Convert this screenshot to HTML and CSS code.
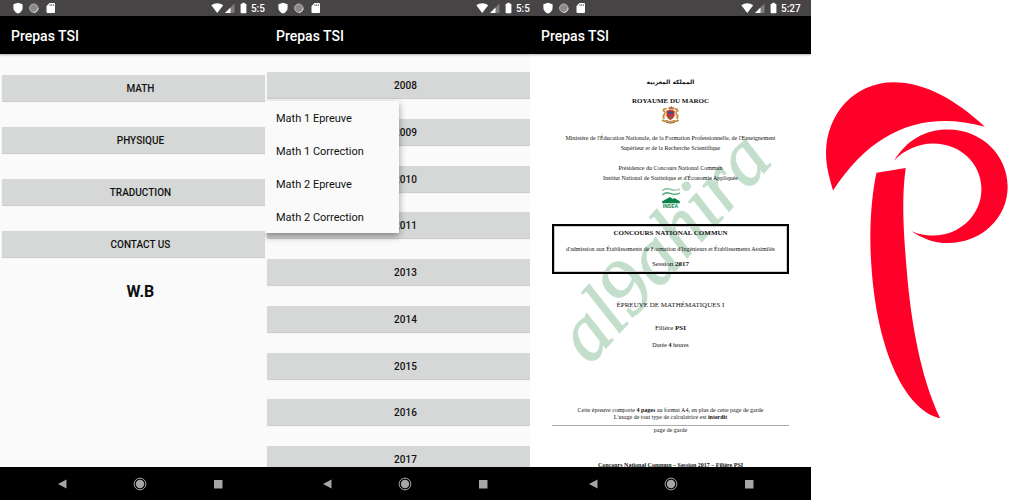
FILE: index.html
```html
<!DOCTYPE html>
<html lang="fr">
<head>
<meta charset="utf-8">
<title>Prepas TSI</title>
<link rel="stylesheet" href="styles.css">
</head>
<body>
<svg class="defs" width="0" height="0" aria-hidden="true">
  <symbol id="notices" viewBox="0 0 44 12">
    <path fill="#fff" d="M5 .8 9.600 2.300V6c0 2.600-1.900 4.500-4.600 5.600C2.300 10.500.4 8.600.4 6V2.300z"/>
    <circle cx="20.800" cy="6.200" r="4.200" fill="#8b898a" stroke="#b9b8b8" stroke-width="1"/>
    <path d="M25 6.200a4.200 4.200 0 0 1-4.200 4.200" fill="none" stroke="#ddd" stroke-width="1"/>
    <path fill="#fff" d="M36.500 1H41a1 1 0 0 1 1 1v8a1 1 0 0 1-1 1h-6.500a1 1 0 0 1-1-1V4z"/>
    <path d="M37 2.200v1.800M38.700 2.200v1.800M40.400 2.200v1.800" stroke="#474445" stroke-width=".7"/>
  </symbol>
  <symbol id="signals" viewBox="0 0 36 12">
    <path fill="#fff" d="M.3 3.300C3.800.6 8.700.6 12.200 3.300L6.250 11z"/>
    <path fill="#7d7b7c" d="M23.500 1.500V11H14z"/>
    <path fill="#fff" d="M19.500 5.500V11H14z"/>
    <path fill="#fff" d="M31.300.8h2.400v1h1.100q.6 0 .6.600v8.200q0 .6-.6.600h-4.600q-.6 0-.6-.6V2.400q0-.6.6-.6h1.100z"/>
  </symbol>
  <symbol id="back" viewBox="0 0 14 14"><path fill="#a6a6a6" d="M11.500 2.600v9L3 7.100z"/></symbol>
  <symbol id="home" viewBox="0 0 14 14"><circle cx="7" cy="7" r="5.900" fill="none" stroke="#b5b5b5" stroke-width=".9"/><circle cx="7" cy="7" r="4.200" fill="#a6a6a6"/></symbol>
  <symbol id="recent" viewBox="0 0 14 14"><path fill="#a6a6a6" d="M3 3h8.500v8.500H3z"/></symbol>
</svg>

<main class="gallery">
  <section class="shot">
    <div class="screen screen-cut">
      <div class="status">
        <svg class="notices"><use href="#notices"/></svg>
        <svg class="signals"><use href="#signals"/></svg>
        <span class="time">5:5</span>
      </div>
      <header class="appbar"><h1>Prepas TSI</h1></header>
      <div class="content menu">
        <button class="tile">MATH</button>
        <button class="tile">PHYSIQUE</button>
        <button class="tile">TRADUCTION</button>
        <button class="tile">CONTACT US</button>
        <p class="signature">W.B</p>
      </div>
      <nav class="navbar">
        <button aria-label="Back"><svg><use href="#back"/></svg></button>
        <button aria-label="Home"><svg><use href="#home"/></svg></button>
        <button aria-label="Recent"><svg><use href="#recent"/></svg></button>
      </nav>
    </div>
  </section>

  <section class="shot">
    <div class="screen screen-cut">
      <div class="status">
        <svg class="notices"><use href="#notices"/></svg>
        <svg class="signals"><use href="#signals"/></svg>
        <span class="time">5:5</span>
      </div>
      <header class="appbar"><h1>Prepas TSI</h1></header>
      <div class="content">
        <div class="years">
          <button class="tile">2008</button>
          <button class="tile">2009</button>
          <button class="tile">2010</button>
          <button class="tile">2011</button>
          <button class="tile">2013</button>
          <button class="tile">2014</button>
          <button class="tile">2015</button>
          <button class="tile">2016</button>
          <button class="tile">2017</button>
        </div>
        <div class="popup">
          <button>Math 1 Epreuve</button>
          <button>Math 1 Correction</button>
          <button>Math 2 Epreuve</button>
          <button>Math 2 Correction</button>
        </div>
      </div>
      <nav class="navbar">
        <button aria-label="Back"><svg><use href="#back"/></svg></button>
        <button aria-label="Home"><svg><use href="#home"/></svg></button>
        <button aria-label="Recent"><svg><use href="#recent"/></svg></button>
      </nav>
    </div>
  </section>

  <section class="shot">
    <div class="screen">
      <div class="status">
        <svg class="notices"><use href="#notices"/></svg>
        <svg class="signals"><use href="#signals"/></svg>
        <span class="time">5:27</span>
      </div>
      <header class="appbar"><h1>Prepas TSI</h1></header>
      <div class="content">
        <svg class="watermark" viewBox="0 0 281 413"><text transform="translate(60 312) rotate(-48)">al9ahira</text></svg>
        <article class="paper">
          <p class="arabic" lang="ar" dir="rtl">المملكة المغربية</p>
          <h2 class="kingdom">ROYAUME DU MAROC</h2>
          <svg class="emblem" viewBox="0 0 57 54">
            <path fill="#b5392c" d="M22 8 24 2l4 3 3-5 3 5 4-3 1 6z"/>
            <path fill="#d8a13c" d="M28 7l2 6h-5zM36 7l2 5h-6z"/>
            <path fill="none" stroke="#c98f35" stroke-width="5" d="M17 9q-9-2-10 5 8 3 3 11-6 6 0 14M40 9q9-2 10 5-8 3-3 11 6 6 0 14"/>
            <path fill="none" stroke="#e3bc68" stroke-width="2" d="M16 14l-5 6 6 5-6 8M41 14l5 6-6 5 6 8"/>
            <path fill="#dc2334" stroke="#b07535" stroke-width="2" d="M17 15q11-7 23 0v14q-2 8-12 13-9-5-11-13z"/>
            <path fill="#29528e" d="M21 19q7-6 15 0v7H21z"/>
            <path fill="#d33140" d="M23 23h11v4H23z"/>
            <path fill="#3c884c" d="m28 28 2 4h4l-3 2 1 4-4-2-4 2 1-4-3-2h4z"/>
            <path fill="none" stroke="#c28d42" stroke-width="5" d="M3 42q7 6 14 2 11 7 22 0 7 4 14-2"/>
            <path fill="none" stroke="#9d5431" stroke-width="3" d="M15 49q13 5 27 0"/>
          </svg>
          <p class="ministry">Ministère de l'Éducation Nationale, de la Formation Professionnelle, de l'Enseignement</p>
          <p>Supérieur et de la Recherche Scientifique</p>
          <p class="presidency">Présidence du Concours National Commun</p>
          <p>Institut National de Statistique et d'Économie Appliquée</p>
          <div class="insea">
            <svg viewBox="0 0 58 54">
              <path fill="#8fc7a5" d="M1 9Q12-1 28 5t29-1v5Q42 15 28 10T1 14z"/>
              <path fill="#5bae7f" d="M1 22Q12 12 28 18t29-1v5Q42 28 28 23T1 27z"/>
              <path fill="#08834b" d="M1 45 26 32l9 6 5-3 17 10v7H1z"/>
            </svg>
            <span>INSEA</span>
          </div>
          <div class="exam">
            <h3>CONCOURS NATIONAL COMMUN</h3>
            <p class="admission">d'admission aux Établissements de Formation d'Ingénieurs et Établissements Assimilés</p>
            <p class="session">Session <b>2017</b></p>
          </div>
          <p class="subject">ÉPREUVE DE MATHÉMATIQUES I</p>
          <p class="stream">Filière <b>PSI</b></p>
          <p class="duration">Durée <b>4</b> heures</p>
          <div class="note">
            <p>Cette épreuve comporte <b>4 pages</b> au format A4, en plus de cette page de garde</p>
            <p>L'usage de tout type de calculatrice est <b>interdit</b></p>
          </div>
          <p class="footer">page de garde</p>
          <p class="next"><b>Concours National Commun – Session 2017 – Filière PSI</b></p>
        </article>
      </div>
      <nav class="navbar">
        <button aria-label="Back"><svg><use href="#back"/></svg></button>
        <button aria-label="Home"><svg><use href="#home"/></svg></button>
        <button aria-label="Recent"><svg><use href="#recent"/></svg></button>
      </nav>
    </div>
  </section>

  <section class="brand">
    <svg viewBox="32 35 548 1014" role="img" aria-label="Logo">
      <g fill="#ff0029">
        <path d="M53 362C43 325 32 290 32 250 32 130 120 36 235 36c95 0 190 54 275 134C330 120 175 175 53 362z"/>
        <path d="M237 272C275 210 330 178 400 178c100 0 179 77 179 172S500 520 400 520c-45 0-80-15-114-38 19 11 44 15 69 15 80 0 145-62 145-140S435 220 355 220c-45 0-90 20-118 52z"/>
        <path d="M184 308 272 294C260 380 264 470 275 600 287 750 315 920 376 1048 270 1025 180 840 167 560 162 470 170 370 184 308z"/>
      </g>
    </svg>
  </section>
</main>
</body>
</html>
```
FILE: styles.css
```css
* { box-sizing: border-box; }
body { margin: 0; background: #fff; font-family: Roboto, sans-serif; color: #111; }
h1, h2, h3, p { margin: 0; }
button { border: 0; padding: 0; font: inherit; color: inherit; background: none; }
svg { display: block; }
.defs { position: absolute; }

.gallery { display: grid; grid-template-columns: 265fr 265fr 281fr 213fr; height: 100vh; min-height: 500px; }
.shot { min-width: 0; overflow: hidden; }
.screen { display: flex; flex-direction: column; height: 100%; }
.screen-cut { width: 106%; background: #fafafa; }

.status { display: flex; align-items: center; height: 16px; padding: 0 10px 0 13px; background: #474445; color: #fff; }
.notices { width: 44px; height: 12px; }
.signals { width: 36px; height: 12px; margin-left: auto; }
.time { width: 20px; margin-left: 4px; font-size: 10px; font-weight: 500; line-height: 16px; padding-top: 1px; }

.appbar { display: flex; align-items: center; height: 38px; padding: 2px 11px 0; background: #000; color: #fff; box-shadow: 0 1px 2px rgba(0, 0, 0, .3); z-index: 1; }
.appbar h1 { font-size: 14px; font-weight: 500; line-height: 20px; }

.content { position: relative; flex: 1; min-height: 0; overflow: hidden; }
.tile { height: 26px; flex: none; padding-top: 1px; border-radius: 1px; background: #d6d8d7; box-shadow: 0 1px 1px rgba(0, 0, 0, .2); font-size: 10px; font-weight: 500; text-align: center; }
.menu { display: flex; flex-direction: column; gap: 26px; padding: 21px 2px 0; }
.signature { padding-top: 1px; font-size: 16px; font-weight: 700; line-height: 16px; text-align: center; }
.years { display: flex; flex-direction: column; justify-content: space-between; height: calc(100% + 5px); padding: 18px 2px 0; }
.popup { position: absolute; top: 47px; left: 0; display: flex; flex-direction: column; width: 134px; background: #fafafa; box-shadow: 0 3px 7px rgba(0, 0, 0, .4); }
.popup button { height: 33px; padding: 2px 0 0 11px; font-size: 11px; text-align: left; }

.navbar { display: flex; justify-content: center; align-items: center; gap: 64px; height: 33px; background: #000; }
.navbar svg { width: 14px; height: 14px; }

.watermark { position: absolute; inset: 0; width: 100%; height: 100%; }
.watermark text { font: italic 80px "Liberation Serif", serif; fill: #c3dfcc; stroke: #c3dfcc; stroke-width: 1px; }
.paper { position: relative; padding: 23px 22px 0; font: 6px/10px "Liberation Serif", serif; text-align: center; white-space: nowrap; }
.paper h2, .paper h3 { font-size: 7px; line-height: 10px; }
.paper .arabic { font-family: "DejaVu Sans", sans-serif; font-weight: 700; }
.paper .kingdom { margin-top: 9px; }
.emblem { width: 19px; height: 18px; margin: 0 auto; }
.ministry { margin-top: 9px; }
.presidency { margin-top: 10px; }
.insea { width: 20px; margin: 4px auto 0; color: #08834b; font: 700 5px/5px "Liberation Sans", sans-serif; }
.insea svg { width: 20px; height: 17px; }
.insea span { display: block; }
.exam { margin-top: 15px; padding: 2px 0 3px; border: 2px solid #000; box-shadow: inset 0 0 0 1px #ccc; }
.admission { margin-top: 6px; }
.session { margin-top: 5px; font-size: 7px; }
.subject { margin-top: 26px; font-size: 7px; }
.stream { margin-top: 13px; font-size: 7px; }
.duration { margin-top: 7px; }
.note { margin-top: 57px; padding-bottom: 4px; border-bottom: 1px solid #aaa; line-height: 7px; }
.footer { margin-top: 1px; line-height: 7px; }
.next { margin-top: 28px; line-height: 7px; }

.brand { display: flex; align-items: center; padding: 0 16px 0 15px; }
.brand svg { width: 100%; }
```
